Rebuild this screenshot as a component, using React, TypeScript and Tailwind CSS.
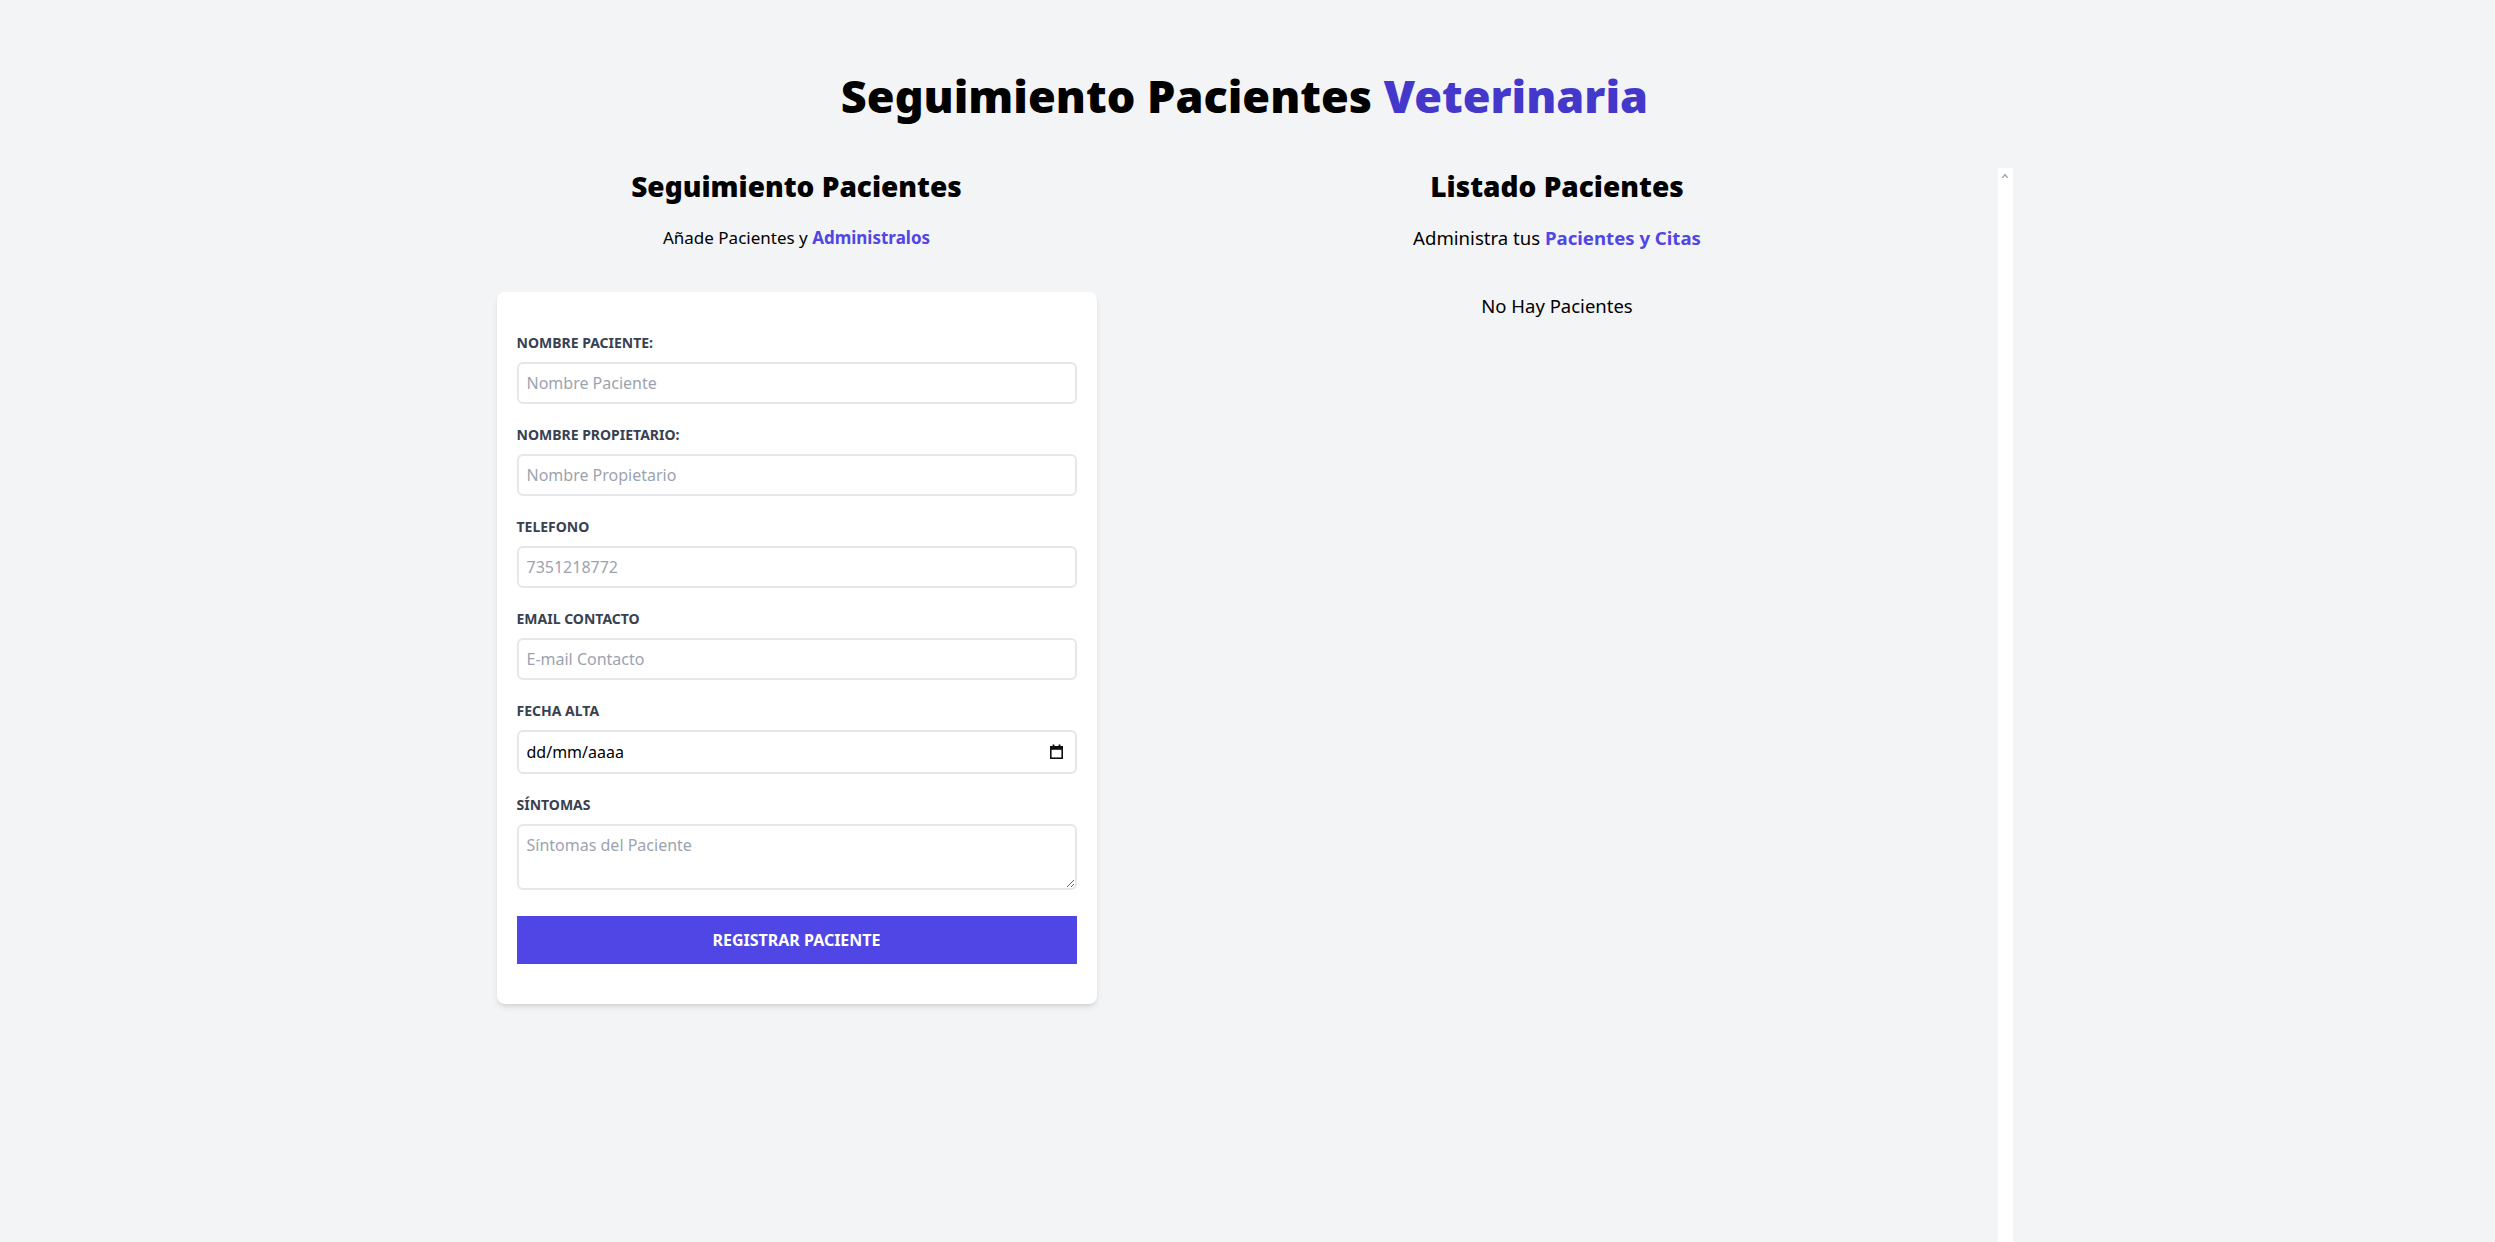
import { useState } from "react";

/**
 * Veterinaria App
 * Form to register patients on the left, list of patients on the right.
 */

type Field = {
  id: string;
  label: string;
  placeholder: string;
  type: string;
};

const fields: Field[] = [
  { id: "mascota", label: "Nombre Paciente:", placeholder: "Nombre Paciente", type: "text" },
  { id: "propietario", label: "Nombre Propietario:", placeholder: "Nombre Propietario", type: "text" },
  { id: "telefono", label: "Telefono", placeholder: "7351218772", type: "tel" },
  { id: "email", label: "Email Contacto", placeholder: "E-mail Contacto", type: "email" },
];

const labelClass = "block text-[#374151] uppercase font-bold text-sm leading-[22px]";
const inputClass =
  "border-2 border-[#e5e7eb] w-full p-2 rounded-md placeholder-[#9ca3af] text-base leading-[22px] outline-none";

function Header() {
  return (
    <h1 className="font-black text-[45px] leading-[48px] text-center md:w-2/3 mx-auto">
      Seguimiento Pacientes <span className="text-[#4338ca]">Veterinaria</span>
    </h1>
  );
}

function CalendarIcon() {
  return (
    <svg width="13" height="15" viewBox="0 0 13 15" fill="none">
      <rect x="0.8" y="2.8" width="11.4" height="11.4" stroke="#111" strokeWidth="1.6" />
      <rect x="0.8" y="2.8" width="11.4" height="3" fill="#111" />
      <rect x="2.6" y="0.5" width="1.8" height="3" fill="#111" />
      <rect x="8.6" y="0.5" width="1.8" height="3" fill="#111" />
    </svg>
  );
}

function Formulario() {
  const [sintomas, setSintomas] = useState("");

  return (
    <div className="md:w-1/2 lg:w-5/12">
      <h2 className="font-black text-[28px] leading-9 text-center">Seguimiento Pacientes</h2>
      <p className="text-[17px] leading-7 mt-5 text-center mb-10">
        Añade Pacientes y <span className="text-[#4f46e5] font-bold">Administralos</span>
      </p>

      <form className="bg-white shadow-md rounded-lg py-10 px-5 mb-10 mx-5">
        {fields.map((f) => (
          <div key={f.id} className="mb-5">
            <label htmlFor={f.id} className={labelClass}>
              {f.label}
            </label>
            <input id={f.id} type={f.type} placeholder={f.placeholder} className={`${inputClass} mt-2`} />
          </div>
        ))}

        <div className="mb-5">
          <label htmlFor="alta" className={labelClass}>
            Fecha Alta
          </label>
          <div className="relative mt-2">
            <input
              id="alta"
              type="text"
              readOnly
              defaultValue="dd/mm/aaaa"
              className={`${inputClass} text-black h-[44px]`}
            />
            <span className="absolute right-[14px] top-[14px] pointer-events-none">
              <CalendarIcon />
            </span>
          </div>
        </div>

        <div className="mb-5">
          <label htmlFor="sintomas" className={labelClass}>
            Síntomas
          </label>
          <textarea
            id="sintomas"
            rows={2}
            value={sintomas}
            onChange={(e) => setSintomas(e.target.value)}
            placeholder="Síntomas del Paciente"
            className={`${inputClass} mt-2 h-[66px]`}
          />
        </div>

        <input
          type="submit"
          value="Registrar Paciente"
          className="bg-[#4f46e5] w-full p-3 text-white uppercase font-bold text-base leading-6 hover:bg-[#4338ca] cursor-pointer"
        />
      </form>
    </div>
  );
}

function ListadoPacientes() {
  return (
    <div className="md:w-1/2 lg:w-7/12 md:h-screen flex">
      <div className="flex-1 overflow-y-auto">
        <h2 className="font-black text-[28px] leading-9 text-center">Listado Pacientes</h2>
        <p className="text-[18.6px] leading-7 mt-5 mb-10 text-center">
          Administra tus <span className="text-[#4f46e5] font-bold">Pacientes y Citas</span>
        </p>
        <p className="text-[18.5px] leading-7 text-center">No Hay Pacientes</p>
      </div>

      {/* scroll track */}
      <div className="w-[15px] bg-white flex justify-center pt-[5px]">
        <svg width="8" height="6" viewBox="0 0 8 6">
          <path d="M4 0.5 L7.5 5 L5.8 5 L4 2.8 L2.2 5 L0.5 5 Z" fill="#a3a3a3" />
        </svg>
      </div>
    </div>
  );
}

export default function App() {
  return (
    <div className="h-screen overflow-hidden bg-[#f3f4f6] pr-[6px] font-['Noto_Sans',sans-serif] text-black">
      <div className="container mx-auto pt-[72px]">
        <Header />
        <div className="mt-12 md:flex">
          <Formulario />
          <ListadoPacientes />
        </div>
      </div>
    </div>
  );
}
